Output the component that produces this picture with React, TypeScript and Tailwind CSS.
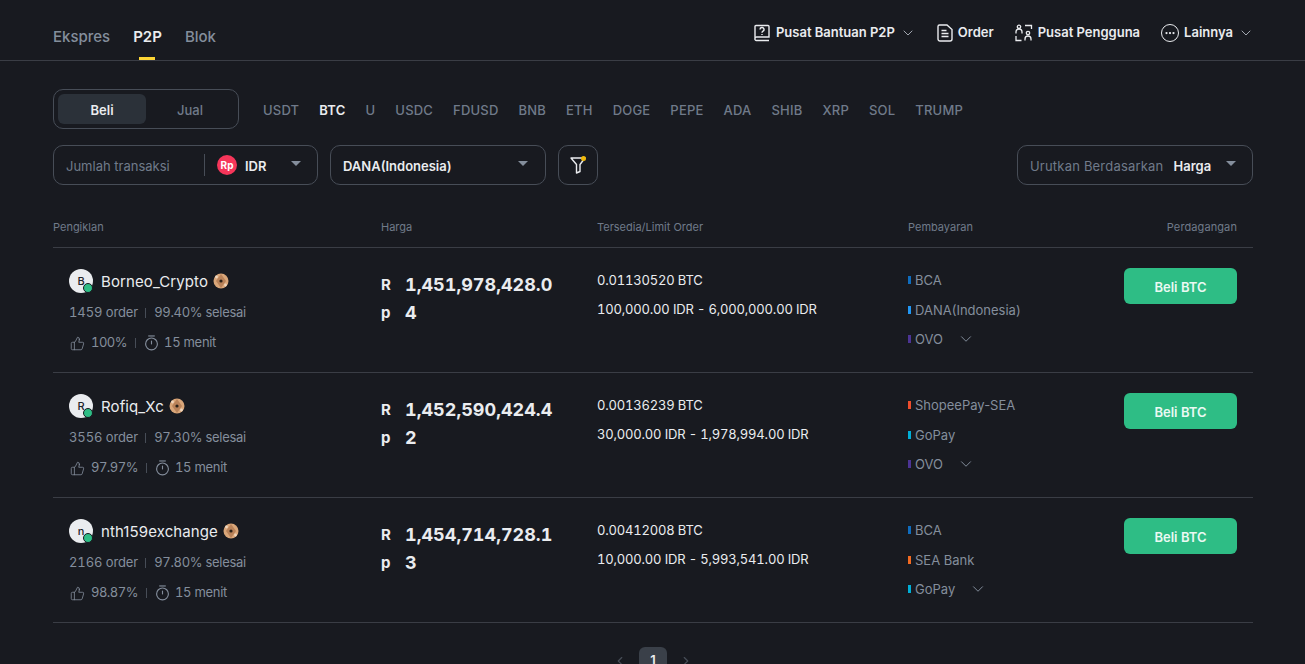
import { ChevronDown, ChevronLeft, ChevronRight, Ellipsis, ThumbsUp } from 'lucide-react';

const coins = ['USDT', 'BTC', 'U', 'USDC', 'FDUSD', 'BNB', 'ETH', 'DOGE', 'PEPE', 'ADA', 'SHIB', 'XRP', 'SOL', 'TRUMP'];

const ads = [
  {
    name: 'Borneo_Crypto',
    initial: 'B',
    orders: '1459 order',
    done: '99.40% selesai',
    like: '100%',
    price: '1,451,978,428.04',
    stock: '0.01130520 BTC',
    limit: '100,000.00 IDR - 6,000,000.00 IDR',
    pays: [
      { label: 'BCA', color: 'bg-[#0f6cbd]' },
      { label: 'DANA(Indonesia)', color: 'bg-[#2196f3]' },
      { label: 'OVO', color: 'bg-[#4c3494]' },
    ],
  },
  {
    name: 'Rofiq_Xc',
    initial: 'R',
    orders: '3556 order',
    done: '97.30% selesai',
    like: '97.97%',
    price: '1,452,590,424.42',
    stock: '0.00136239 BTC',
    limit: '30,000.00 IDR - 1,978,994.00 IDR',
    pays: [
      { label: 'ShopeePay-SEA', color: 'bg-[#ee4d2d]' },
      { label: 'GoPay', color: 'bg-[#00aed6]' },
      { label: 'OVO', color: 'bg-[#4c3494]' },
    ],
  },
  {
    name: 'nth159exchange',
    initial: 'n',
    orders: '2166 order',
    done: '97.80% selesai',
    like: '98.87%',
    price: '1,454,714,728.13',
    stock: '0.00412008 BTC',
    limit: '10,000.00 IDR - 5,993,541.00 IDR',
    pays: [
      { label: 'BCA', color: 'bg-[#0f6cbd]' },
      { label: 'SEA Bank', color: 'bg-[#f26a21]' },
      { label: 'GoPay', color: 'bg-[#00aed6]' },
    ],
  },
];

const Caret = () => (
  <svg width="10" height="5" viewBox="0 0 10 5" className="mb-[3px] shrink-0">
    <path d="M0 0h10L5 5z" fill="#848e9c" />
  </svg>
);

const Badge = () => (
  <svg width="16" height="16" viewBox="0 0 16 16" className="shrink-0">
    <circle cx="8" cy="8" r="7.500" fill="#d9a679" />
    <path d="M8 1 13 8 8 15 3 8z" fill="#b98259" />
    <circle cx="8" cy="8" r="1.600" fill="#2b2118" />
    <circle cx="3.500" cy="4" r="1.400" fill="#f0d6bd" />
    <circle cx="12.500" cy="12" r="1.400" fill="#f0d6bd" />
  </svg>
);

const TimerIcon = () => (
  <svg width="15" height="16" viewBox="0 0 16 17" fill="none" stroke="currentColor" strokeWidth="1.200" className="shrink-0">
    <path d="M4.500 1h7" />
    <circle cx="8" cy="9.500" r="6.300" />
    <path d="M8 6v4" />
  </svg>
);

const Navbar = () => (
  <header className="flex h-[61px] items-stretch justify-between border-b border-[#3a3d45] pl-[53px] pr-[51px]">
    <nav className="flex items-stretch gap-[23px] text-[15px] font-medium text-[#848e9c]">
      <span className="flex items-center pt-[15px]">Ekspres</span>
      <span className="relative flex items-center pt-[15px] font-semibold text-[#eaecef]">
        P2P
        <span className="absolute bottom-0 left-[6px] h-[3px] w-[16px] bg-[#fcd535]" />
      </span>
      <span className="flex items-center pt-[15px]">Blok</span>
    </nav>
    <div className="flex items-center gap-[21px] pt-[5px] text-[13px] font-semibold text-[#eaecef]">
      <div className="flex items-center gap-[5px]">
        <svg width="18" height="18" viewBox="0 0 18 18" fill="none" stroke="#eaecef" strokeWidth="1.4">
          <path d="M2 15V2.500a1 1 0 0 1 1-1h12a1 1 0 0 1 1 1V13H3.500A1.500 1.500 0 0 0 2 14.500 1.500 1.500 0 0 0 3.500 16.500H16" />
          <path d="M7 5.500a2 2 0 1 1 3 1.700c-.7.4-1 .8-1 1.500" />
          <path d="M9 10v.9" />
        </svg>
        <span>Pusat Bantuan P2P</span>
        <ChevronDown size={16} className="text-[#b7bdc6]" strokeWidth={1.3} />
      </div>
      <div className="flex items-center gap-[5px]">
        <svg width="16" height="18" viewBox="0 0 16 18" fill="none" stroke="#eaecef" strokeWidth="1.4">
          <path d="M2.500 1h7.500L15 5.500V15a2 2 0 0 1-2 2H3a2 2 0 0 1-2-2V2.500A1.500 1.500 0 0 1 2.500 1z" />
          <path d="M4.500 6.500h5M4.500 9.500h7M4.500 12.500h7" />
        </svg>
        <span>Order</span>
      </div>
      <div className="flex items-center gap-[5px]">
        <svg width="18" height="18" viewBox="0 0 18 18" fill="none" stroke="#eaecef" strokeWidth="1.3">
          <circle cx="4" cy="2.800" r="1.700" />
          <path d="M1 9.500V8a3 3 0 0 1 6 0v1.500" />
          <circle cx="13" cy="9" r="1.700" />
          <path d="M10 16.500V15a3 3 0 0 1 6 0v1.500" />
          <path d="M10 1.500h6.500V5M1 12v4.500h5.500" />
        </svg>
        <span>Pusat Pengguna</span>
      </div>
      <div className="flex items-center gap-[5px]">
        <span className="flex h-[18px] w-[18px] items-center justify-center rounded-full border-[1.4px] border-[#eaecef]">
          <Ellipsis size={12} strokeWidth={2.500} />
        </span>
        <span>Lainnya</span>
        <ChevronDown size={16} className="text-[#b7bdc6]" strokeWidth={1.3} />
      </div>
    </div>
  </header>
);

const Filters = () => (
  <section className="flex flex-col gap-[16px] pt-[28px]">
    <div className="flex items-center gap-[24px]">
      <div className="flex h-[40px] w-[186px] items-center rounded-[10px] border border-[#474d57] p-[4px] text-[13px] font-semibold">
        <span className="flex h-[30px] w-[88px] items-center justify-center rounded-[6px] bg-[#2b3139] pt-[3px] text-[#eaecef]">Beli</span>
        <span className="flex h-[30px] flex-1 items-center justify-center pt-[3px] font-medium text-[#707a8a]">Jual</span>
      </div>
      <div className="flex items-center gap-[20px] pt-[3px] text-[13px] font-medium tracking-[0.2px] text-[#707a8a]">
        {coins.map((coin) => (
          <span key={coin} className={coin === 'BTC' ? 'font-semibold text-[#eaecef]' : ''}>
            {coin}
          </span>
        ))}
      </div>
    </div>
    <div className="flex items-center">
      <div className="flex h-[40px] w-[265px] items-center rounded-[10px] border border-[#474d57] pl-[12px] pr-[16px] text-[13px]">
        <span className="mt-[3px] w-[138px] text-[#707a8a]">Jumlah transaksi</span>
        <span className="h-[22px] w-px bg-[#474d57]" />
        <span className="ml-[12px] flex h-[20px] w-[20px] items-center justify-center rounded-full bg-[#f6365a] text-[10px] font-bold text-white">Rp</span>
        <span className="ml-[8px] mt-[3px] font-semibold text-[#eaecef]">IDR</span>
        <span className="ml-auto flex">
          <Caret />
        </span>
      </div>
      <div className="ml-[12px] flex h-[40px] w-[216px] items-center justify-between rounded-[10px] border border-[#474d57] pl-[12px] pr-[17px] text-[13px] font-semibold text-[#eaecef]">
        <span className="mt-[3px]">DANA(Indonesia)</span>
        <Caret />
      </div>
      <div className="relative ml-[12px] flex h-[40px] w-[40px] items-center justify-center rounded-[10px] border border-[#474d57]">
        <svg width="16" height="18" viewBox="0 0 16 18" fill="none" stroke="#eaecef" strokeWidth="1.4" strokeLinejoin="round">
          <path d="M1 2h14L10 8.500V15.500L6.500 17V8.500z" />
        </svg>
        <span className="absolute left-[22px] top-[10px] h-[5px] w-[5px] rounded-full bg-[#f0b90b]" />
      </div>
      <div className="ml-auto flex h-[40px] w-[236px] items-center rounded-[10px] border border-[#474d57] pl-[12px] pr-[16px] text-[13px]">
        <span className="mt-[3px] tracking-[0.2px] text-[#707a8a]">Urutkan Berdasarkan</span>
        <span className="ml-[10px] mt-[3px] font-semibold text-[#eaecef]">Harga</span>
        <span className="ml-auto flex">
          <Caret />
        </span>
      </div>
    </div>
  </section>
);

const AdRow = ({ ad }: { ad: (typeof ads)[number] }) => (
  <div className="grid h-[125px] grid-cols-[328px_216px_311px_1fr] border-b border-[#3a3d45] tabular-nums">
    <div className="pl-[16px] pt-[21px]">
      <div className="flex h-[24px] items-center">
        <span className="relative flex h-[24px] w-[24px] items-center justify-center rounded-full bg-[#eaecef] text-[11px] font-medium text-[#1e2329]">
          {ad.initial}
          <span className="absolute bottom-0 right-0 h-[10px] w-[10px] rounded-full border border-[#181a20] bg-[#2ebd85]" />
        </span>
        <span className="ml-[8px] mt-[2px] text-[15px] tracking-[0.1px] text-[#eaecef] [font-variant-numeric:normal]">{ad.name}</span>
        <span className="ml-[5px] flex">
          <Badge />
        </span>
      </div>
      <div className="mt-[12px] flex h-[16px] items-center text-[13px] tracking-[-0.1px] text-[#848e9c]">
        <span>{ad.orders}</span>
        <span className="ml-[7px] mr-[8px] h-[10px] w-px bg-[#474d57]" />
        <span className="tracking-[-0.3px]">{ad.done}</span>
      </div>
      <div className="mt-[14px] flex h-[16px] items-center pl-[1px] text-[13px] tracking-[-0.3px] text-[#848e9c]">
        <ThumbsUp size={15} strokeWidth={1.3} />
        <span className="ml-[6px] tracking-[-0.5px]">{ad.like}</span>
        <span className="mx-[8px] h-[10px] w-px bg-[#474d57]" />
        <TimerIcon />
        <span className="ml-[5px]">15 menit</span>
      </div>
    </div>
    <div className="flex pt-[23px] text-[#eaecef]">
      <span className="w-[24px] break-all pr-[11px] text-[15px] font-bold leading-[28px]">Rp</span>
      <span className="w-[153px] break-all text-[18px] font-bold leading-[28px]">{ad.price}</span>
    </div>
    <div className="pt-[24px] text-[13px] tracking-[-0.18px] text-[#eaecef]">
      <div className="h-[16px] leading-[16px]">{ad.stock}</div>
      <div className="mt-[13px] h-[16px] leading-[16px]">{ad.limit}</div>
    </div>
    <div className="flex justify-between pr-[16px] pt-[20px]">
      <div className="flex flex-col gap-[13.500px] pt-[5px] text-[13px] text-[#848e9c] [font-variant-numeric:normal]">
        {ad.pays.map((pay, i) => (
          <div key={pay.label} className="flex h-[16px] items-center">
            <span className={`mb-[2px] h-[8px] w-[3px] ${pay.color}`} />
            <span className="ml-[4px]">{pay.label}</span>
            {i === 2 && <ChevronDown size={18} strokeWidth={1.3} className="mb-[3px] ml-[14px]" />}
          </div>
        ))}
      </div>
      <button className="h-[36px] w-[113px] rounded-[6px] bg-[#2ebd85] pt-[3px] text-[13px] font-semibold text-[#eaf9f3]">Beli BTC</button>
    </div>
  </div>
);

export default function App() {
  return (
    <div className="h-screen overflow-hidden bg-[#181a20] font-['Inter',sans-serif]">
      <Navbar />
      <main className="pl-[53px] pr-[52px]">
        <Filters />
        <div className="mt-[21px] grid h-[42px] grid-cols-[328px_216px_311px_1fr] items-center border-b border-[#3a3d45] pt-[2px] text-[11px] text-[#707a8a]">
          <span>Pengiklan</span>
          <span>Harga</span>
          <span>Tersedia/Limit Order</span>
          <div className="flex justify-between pr-[16px]">
            <span>Pembayaran</span>
            <span className="tracking-[0.1px]">Perdagangan</span>
          </div>
        </div>
        {ads.map((ad) => (
          <AdRow key={ad.name} ad={ad} />
        ))}
        <div className="mt-[24px] flex items-center justify-center gap-[12px] text-[#474d57]">
          <ChevronLeft size={14} strokeWidth={2} />
          <span className="flex h-[28px] w-[28px] items-center justify-center rounded-[6px] bg-[#3a4049] text-[13px] font-semibold text-[#eaecef]">1</span>
          <ChevronRight size={14} strokeWidth={2} />
        </div>
      </main>
    </div>
  );
}
